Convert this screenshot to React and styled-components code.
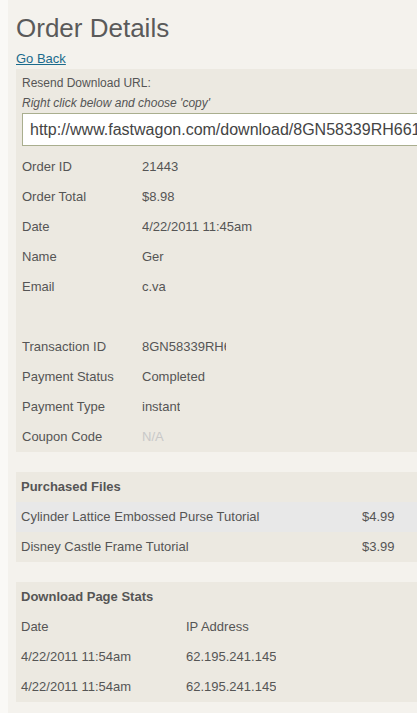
import React from "react";
import styled, { createGlobalStyle } from "styled-components";

const Global = createGlobalStyle`
  html, body { margin: 0; padding: 0; background: #faf9f6; overflow: hidden; }
  body { font-family: "Liberation Sans", Arial, sans-serif; }
`;

const Page = styled.div`
  margin-left: 8px;
  min-height: 713px;
  background: #f4f2ed;
  padding: 13px 0 0 8px;
  overflow: hidden;
  color: #555;
  font-size: 13px;
`;

const Title = styled.h1`
  margin: 0;
  font-size: 26px;
  line-height: 30px;
  font-weight: normal;
  color: #5a5a5a;
`;

const BackLink = styled.a`
  display: inline-block;
  margin-top: 7px;
  font-size: 13px;
  line-height: 18px;
  color: #1b6b8c;
  text-decoration: underline;
`;

const Panel = styled.section`
  width: 460px;
  background: #ece9e1;
  margin-top: ${(p) => p.$gap}px;
  padding-left: ${(p) => p.$pad}px;
  box-sizing: border-box;
`;

const Intro = styled.div`
  padding-top: 4px;
  font-size: 12px;
  line-height: 20px;
`;

const Italic = styled.div`
  font-style: italic;
`;

const UrlInput = styled.input`
  display: block;
  width: 440px;
  height: 33px;
  margin-bottom: 6px;
  box-sizing: border-box;
  border: 1px solid #a9ae8e;
  background: #fff;
  padding: 0 0 0 7px;
  font-family: "Liberation Sans", Arial, sans-serif;
  font-size: 16px;
  color: #444;
  outline: none;
`;

const Row = styled.div`
  display: flex;
  height: 30px;
  line-height: 30px;
  background: ${(p) => (p.$shade ? "#e8e8e8" : "transparent")};
  margin-left: ${(p) => (p.$shade ? `-${p.$pad}px` : "0")};
  padding-left: ${(p) => (p.$shade ? `${p.$pad}px` : "0")};
`;

const Label = styled.div`
  width: ${(p) => p.$w}px;
  flex-shrink: 0;
  white-space: nowrap;
`;

const Value = styled.div`
  white-space: nowrap;
  overflow: hidden;
  max-width: ${(p) => (p.$clip ? `${p.$clip}px` : "none")};
  color: ${(p) => (p.$muted ? "#c8c8c8" : "inherit")};
`;

const Heading = styled.div`
  height: 30px;
  line-height: 30px;
  font-weight: bold;
`;

const details = [
  ["Order ID", "21443"],
  ["Order Total", "$8.98"],
  ["Date", "4/22/2011 11:45am"],
  ["Name", "Ger"],
  ["Email", "c.va"],
  [null, null],
  ["Transaction ID", "8GN58339RH66", 84],
  ["Payment Status", "Completed"],
  ["Payment Type", "instant"],
  ["Coupon Code", "N/A", null, true],
];

const files = [
  ["Cylinder Lattice Embossed Purse Tutorial", "$4.99"],
  ["Disney Castle Frame Tutorial", "$3.99"],
];

const stats = [
  ["Date", "IP Address"],
  ["4/22/2011 11:54am", "62.195.241.145"],
  ["4/22/2011 11:54am", "62.195.241.145"],
];

export default function App() {
  return (
    <>
      <Global />
      <Page>
        <Title>Order Details</Title>
        <BackLink href="#">Go Back</BackLink>

        <Panel $gap={1} $pad={6}>
          <Intro>
            <div>Resend Download URL:</div>
            <Italic>Right click below and choose 'copy'</Italic>
          </Intro>
          <UrlInput
            readOnly
            value="http://www.fastwagon.com/download/8GN58339RH66123"
          />
          {details.map(([l, v, clip, muted], i) => (
            <Row key={i}>
              <Label $w={120}>{l}</Label>
              <Value $clip={clip} $muted={muted}>{v}</Value>
            </Row>
          ))}
        </Panel>

        <Panel $gap={20} $pad={5}>
          <Heading>Purchased Files</Heading>
          {files.map(([n, p], i) => (
            <Row key={n} $shade={i === 0} $pad={5}>
              <Label $w={341}>{n}</Label>
              <Value>{p}</Value>
            </Row>
          ))}
        </Panel>

        <Panel $gap={20} $pad={5}>
          <Heading>Download Page Stats</Heading>
          {stats.map(([d, ip], i) => (
            <Row key={i}>
              <Label $w={165}>{d}</Label>
              <Value>{ip}</Value>
            </Row>
          ))}
        </Panel>
      </Page>
    </>
  );
}
